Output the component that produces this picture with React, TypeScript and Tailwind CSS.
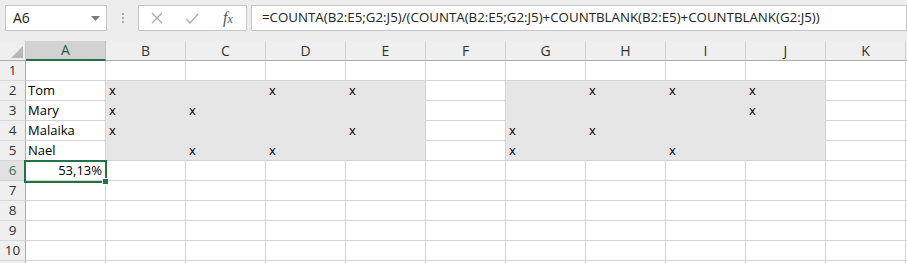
import React from "react";

const COLS = ["A", "B", "C", "D", "E", "F", "G", "H", "I", "J", "K", "L"];
const ROWS = [1, 2, 3, 4, 5, 6, 7, 8, 9, 10, 11];
const NAMES: Record<number, string> = { 2: "Tom", 3: "Mary", 4: "Malaika", 5: "Nael" };
const MARKS: Record<number, string[]> = {
  2: ["B", "D", "E", "H", "I", "J"],
  3: ["B", "C", "J"],
  4: ["B", "E", "G", "H"],
  5: ["C", "D", "G", "I"],
};
const FILL_COLS = ["B", "C", "D", "E", "G", "H", "I", "J"];

function isFilled(r: number, c: string) {
  return r >= 2 && r <= 5 && FILL_COLS.includes(c);
}

function Cell({ r, c }: { r: number; c: string }) {
  const filled = isFilled(r, c);
  const rightGrid = !filled || c === "E" || c === "J";
  const bottomGrid = !filled || r === 5;
  let cls = "w-[80px] shrink-0 h-[20px] border-r border-b flex items-end overflow-hidden ";
  cls += filled ? "bg-[#e7e6e6] " : "bg-white ";
  cls += rightGrid ? "border-r-[#d4d4d4] " : "border-r-[#e7e6e6] ";
  cls += bottomGrid ? "border-b-[#d4d4d4] " : "border-b-[#e7e6e6] ";
  let content: React.ReactNode = null;
  if (c === "A" && NAMES[r]) {
    content = <span className="pl-[2px] pb-[1px] leading-[17px]">{NAMES[r]}</span>;
  } else if (c === "A" && r === 6) {
    content = <span className="w-full text-right pr-[3px] pb-[1px] leading-[17px]">53,13%</span>;
  } else if (MARKS[r] && MARKS[r].includes(c)) {
    content = <span className="pl-[3px] pb-[1px] leading-[17px]">x</span>;
  }
  return <div className={cls}>{content}</div>;
}

export default function App() {
  return (
    <div className="w-[907px] h-[263px] overflow-hidden bg-[#ededed] font-['Open_Sans','Noto_Sans',sans-serif] text-[#000]">
      {/* toolbar */}
      <div className="h-[41px] flex items-start pt-[5px]">
        <div className="ml-[5px] w-[102px] h-[26px] bg-white border border-[#c6c6c6] flex items-center justify-between pl-[7px] pr-[6px]">
          <span className="text-[14px] text-[#222] leading-none">A6</span>
          <svg width="9" height="5" viewBox="0 0 9 5">
            <path d="M0 0 L9 0 L4.5 5 Z" fill="#7a7a7a" />
          </svg>
        </div>
        <div className="w-[31px] h-[26px] flex flex-col items-center justify-center gap-[2px]">
          <div className="w-[2px] h-[2px] bg-[#a8a8a8]" />
          <div className="w-[2px] h-[2px] bg-[#a8a8a8]" />
          <div className="w-[2px] h-[2px] bg-[#a8a8a8]" />
        </div>
        <div className="w-[109px] h-[26px] bg-white border border-[#c6c6c6] flex items-center">
          <svg className="ml-[12px]" width="12" height="12" viewBox="0 0 12 12">
            <path d="M1 1 L11 11 M11 1 L1 11" stroke="#a9a9a9" strokeWidth="1.3" />
          </svg>
          <svg className="ml-[22px]" width="14" height="11" viewBox="0 0 14 11">
            <path d="M1 6 L5 10 L13 1" stroke="#b3b3b3" strokeWidth="1.6" fill="none" />
          </svg>
          <span className="ml-[24px] font-['Liberation_Serif',serif] italic text-[#555] leading-none">
            <span className="text-[16px]">f</span>
            <span className="text-[12px]">x</span>
          </span>
        </div>
        <div className="ml-[4px] flex-1 h-[26px] bg-white border border-[#c6c6c6] flex items-center pl-[10px]">
          <span className="text-[13.3px] text-[#222] leading-none whitespace-nowrap">
            =COUNTA(B2:E5;G2:J5)/(COUNTA(B2:E5;G2:J5)+COUNTBLANK(B2:E5)+COUNTBLANK(G2:J5))
          </span>
        </div>
      </div>

      {/* grid */}
      <div className="relative">
        {/* header row */}
        <div className="flex h-[20px]">
          <div className="w-[26px] shrink-0 h-[20px] bg-[#efefef] border-r border-b border-r-[#c8c8c8] border-b-[#ababab] flex items-end justify-end pr-[2px] pb-[2px]">
            <svg width="12" height="12" viewBox="0 0 12 12">
              <path d="M12 0 L12 12 L0 12 Z" fill="#b7b7b7" />
            </svg>
          </div>
          {COLS.map((c) =>
            c === "A" ? (
              <div
                key={c}
                className="w-[80px] shrink-0 h-[20px] bg-[#d2d2d2] border-r border-r-[#c0c0c0] border-b-2 border-b-[#217346] flex items-center justify-center text-[14px] text-[#1e5e3a] leading-none"
              >
                {c}
              </div>
            ) : (
              <div
                key={c}
                className="w-[80px] shrink-0 h-[20px] bg-[#efefef] border-r border-b border-r-[#d0d0d0] border-b-[#ababab] flex items-center justify-center text-[14px] text-[#333] leading-none"
              >
                {c === "L" ? "" : c}
              </div>
            )
          )}
        </div>
        {ROWS.map((r) => (
          <div key={r} className="flex h-[20px] text-[13px]">
            {r === 6 ? (
              <div className="w-[26px] shrink-0 h-[20px] bg-[#e1e1e1] border-r border-b border-r-[#ababab] border-b-[#d0d0d0] flex items-center justify-center text-[13.5px] text-[#3c6e4d] leading-none">
                {r}
              </div>
            ) : (
              <div className="w-[26px] shrink-0 h-[20px] bg-[#efefef] border-r border-b border-r-[#ababab] border-b-[#d8d8d8] flex items-center justify-center text-[13.5px] text-[#333] leading-none">
                {r === 11 ? "" : r}
              </div>
            )}
            {COLS.map((c) => (
              <Cell key={c} r={r} c={c} />
            ))}
          </div>
        ))}
        {/* selection */}
        <div className="absolute left-[24px] top-[119px] w-[83px] h-[23px] border-2 border-[#217346] pointer-events-none" />
        <div className="absolute left-[102px] top-[137px] w-[7px] h-[7px] bg-[#217346] border border-white pointer-events-none" />
      </div>
    </div>
  );
}
